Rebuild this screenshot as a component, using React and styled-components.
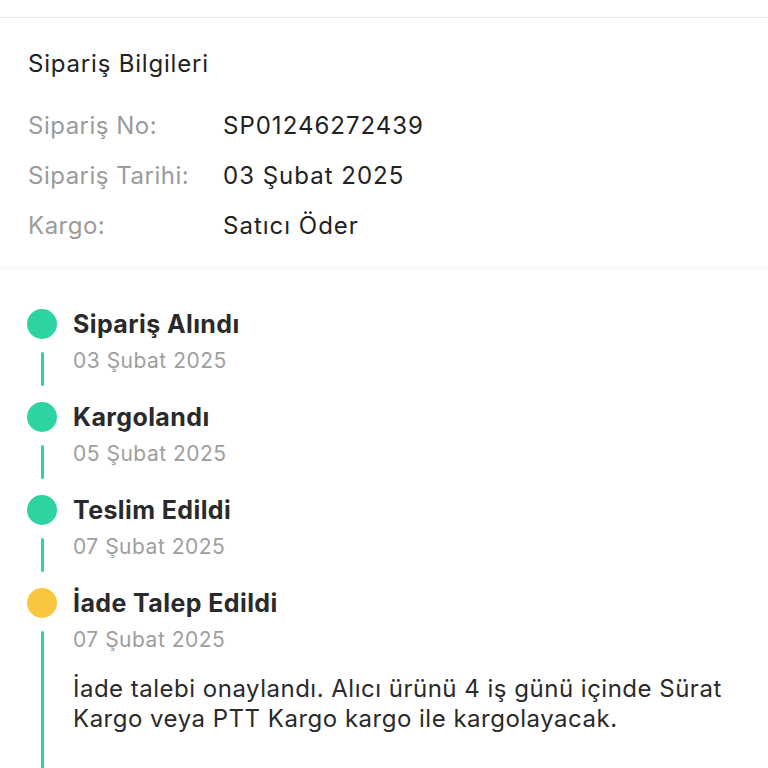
import React from "react";
import styled, { createGlobalStyle } from "styled-components";

const Global = createGlobalStyle`
  html, body { margin: 0; padding: 0; background: #ffffff; }
  body { font-family: Inter, "Noto Sans", sans-serif; color: #222; }
`;

const Page = styled.div`
  display: flex;
  flex-direction: column;
`;

const TopBar = styled.div`
  height: 17px;
  border-bottom: 1px solid #e8e8e8;
`;

const InfoSection = styled.section`
  padding: 29px 28px 15px;
  display: flex;
  flex-direction: column;
`;

const SectionTitle = styled.h2`
  margin: 0 0 20px;
  font-size: 24px;
  letter-spacing: 0.8px;
  line-height: 34px;
  font-weight: 400;
  color: #222;
`;

const InfoRow = styled.div`
  display: grid;
  grid-template-columns: 195px 1fr;
  font-size: 24px;
  line-height: 50px;
`;

const Label = styled.span`
  color: #9b9b9b;
  letter-spacing: 0.5px;
`;

const Value = styled.span`
  color: #222;
  letter-spacing: 1px;
`;

const Divider = styled.div`
  height: 5px;
  background: #fafafa;
`;

const Timeline = styled.section`
  padding: 38px 0 0 27px;
  display: flex;
  flex-direction: column;
`;

const Item = styled.div`
  display: grid;
  grid-template-columns: 30px 1fr;
  grid-template-rows: 30px auto;
  column-gap: 16px;
`;

const Dot = styled.div`
  width: 30px;
  height: 30px;
  border-radius: 50%;
  background: ${(p) => p.$color};
`;

const Title = styled.div`
  font-size: 25px;
  letter-spacing: 0.4px;
  font-weight: 700;
  line-height: 30px;
  color: #2a2a2a;
`;

const Rail = styled.div`
  display: flex;
  justify-content: center;
  padding: 13px 0 16px;
`;

const Line = styled.div`
  width: 3px;
  border-radius: 2px;
  background: #2dd3a0;
`;

const Body = styled.div`
  padding: 8px 40px ${(p) => p.$bottom}px 0;
`;

const DateText = styled.div`
  font-size: 21px;
  letter-spacing: 0.5px;
  line-height: 28px;
  color: #9e9e9e;
`;

const Desc = styled.p`
  margin: 20px 0 0;
  font-size: 24px;
  letter-spacing: 0.5px;
  line-height: 30px;
  color: #2a2a2a;
`;

const GREEN = "#2dd3a0";
const YELLOW = "#fbc63f";

const events = [
  { title: "Sipariş Alındı", date: "03 Şubat 2025", color: GREEN },
  { title: "Kargolandı", date: "05 Şubat 2025", color: GREEN },
  { title: "Teslim Edildi", date: "07 Şubat 2025", color: GREEN },
  {
    title: "İade Talep Edildi",
    date: "07 Şubat 2025",
    color: YELLOW,
    desc: "İade talebi onaylandı. Alıcı ürünü 4 iş günü içinde Sürat Kargo veya PTT Kargo kargo ile kargolayacak.",
  },
];

export default function App() {
  return (
    <Page>
      <Global />
      <TopBar />
      <InfoSection>
        <SectionTitle>Sipariş Bilgileri</SectionTitle>
        <InfoRow>
          <Label>Sipariş No:</Label>
          <Value>SP01246272439</Value>
        </InfoRow>
        <InfoRow>
          <Label>Sipariş Tarihi:</Label>
          <Value>03 Şubat 2025</Value>
        </InfoRow>
        <InfoRow>
          <Label>Kargo:</Label>
          <Value>Satıcı Öder</Value>
        </InfoRow>
      </InfoSection>
      <Divider />
      <Timeline>
        {events.map((e, i) => (
          <Item key={i}>
            <Dot $color={e.color} />
            <Title>{e.title}</Title>
            <Rail>
              <Line />
            </Rail>
            <Body $bottom={e.desc ? 60 : 27}>
              <DateText>{e.date}</DateText>
              {e.desc && <Desc>{e.desc}</Desc>}
            </Body>
          </Item>
        ))}
      </Timeline>
    </Page>
  );
}
